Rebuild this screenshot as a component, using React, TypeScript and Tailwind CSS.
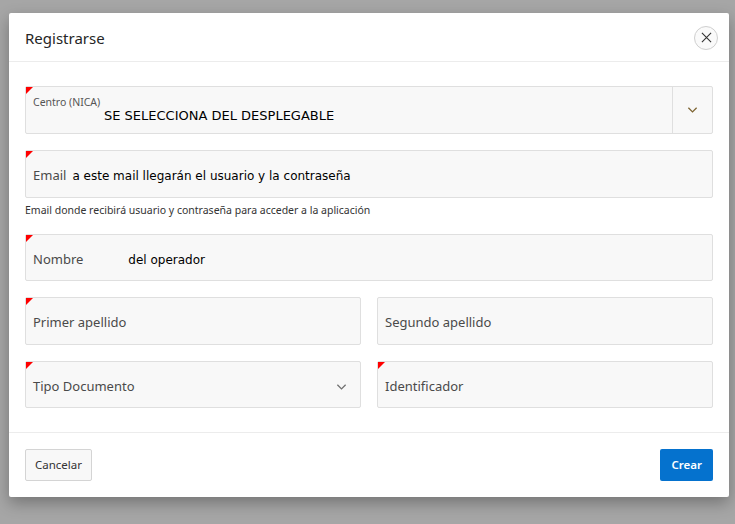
import React from 'react';

const uiFont = { fontFamily: '"Noto Sans", "Open Sans", sans-serif' };
const handFont = { fontFamily: '"DejaVu Sans", "Liberation Sans", sans-serif' };

const Required: React.FC = () => (
  <span className="absolute left-0 top-0 w-0 h-0 border-t-[7px] border-r-[7px] border-t-[#ff0000] border-r-transparent" />
);

const Chevron: React.FC<{ className?: string }> = ({ className }) => (
  <svg viewBox="0 0 12 8" className={className} fill="none" stroke="currentColor" strokeWidth="1.4">
    <path d="M1.5 1.5 L6 6 L10.5 1.5" />
  </svg>
);

const Field: React.FC<{
  label: string;
  value?: string;
  valueOffset?: string;
  required?: boolean;
  select?: boolean;
  short?: boolean;
}> = ({ label, value, valueOffset, required, select, short }) => (
  <div
    className={`relative ${short ? 'h-[47px]' : 'h-[48px]'} flex items-center bg-[#f8f8f8] border border-[#dfdfdf] rounded-[2px] pl-[7px] pr-3`}
  >
    {required && <Required />}
    <span className="text-[13px] text-[#4a4a4a] pt-1">{label}</span>
    {value && (
      <span className={`text-[12px] text-black pt-1 ${valueOffset}`} style={handFont}>
        {value}
      </span>
    )}
    {select && <Chevron className="ml-auto w-[11px] h-[8px] text-[#707070] mt-1 mr-[1px]" />}
  </div>
);

export default function App() {
  return (
    <div className="w-full h-[524px] bg-[#a6a6a6] pt-[13px] pl-[9px] overflow-hidden" style={uiFont}>
      <div className="w-[720px] bg-white rounded-[2px] shadow-[0_6px_16px_rgba(0,0,0,0.3)] flex flex-col">
        {/* Header */}
        <div className="h-[49px] flex items-center justify-between pl-4 pr-[11px] border-b border-[#ececec]">
          <h1 className="text-[15px] text-[#262626] pt-[2px]">Registrarse</h1>
          <button className="w-[24px] h-[24px] mt-[1px] rounded-full border border-[#cfcfcf] bg-[#fafafa] flex items-center justify-center text-[#333]">
            <svg viewBox="0 0 12 12" className="w-[11px] h-[11px]" stroke="currentColor" strokeWidth="1.2">
              <path d="M1 1 L11 11 M11 1 L1 11" />
            </svg>
          </button>
        </div>

        {/* Body */}
        <div className="px-4 pt-6 pb-6 flex flex-col">
          {/* Centro */}
          <div className="relative h-[48px] flex bg-[#f8f8f8] border border-[#dfdfdf] rounded-[2px]">
            <Required />
            <div className="flex-1 flex flex-col pl-[7px] pt-[8px]">
              <span className="text-[10.5px] leading-[14px] text-[#555]">Centro (NICA)</span>
              <span className="text-[13px] leading-[16px] text-black pl-[71px] mt-[-1px]" style={handFont}>
                SE SELECCIONA DEL DESPLEGABLE
              </span>
            </div>
            <div className="w-[40px] border-l border-[#dfdfdf] flex items-center justify-center">
              <Chevron className="w-[11px] h-[8px] text-[#7d6432]" />
            </div>
          </div>

          <div className="mt-4">
            <Field label="Email" value="a este mail llegarán el usuario y la contraseña" valueOffset="ml-[6px]" required />
          </div>
          <p className="text-[10.5px] text-[#333] mt-[5px] leading-[14px]">
            Email donde recibirá usuario y contraseña para acceder a la aplicación
          </p>

          <div className="mt-[17px]">
            <Field label="Nombre" value="del operador" valueOffset="ml-[45px]" required short />
          </div>

          <div className="mt-4 grid grid-cols-2 gap-4">
            <Field label="Primer apellido" required />
            <Field label="Segundo apellido" />
          </div>

          <div className="mt-4 grid grid-cols-2 gap-4">
            <Field label="Tipo Documento" required select short />
            <Field label="Identificador" required short />
          </div>
        </div>

        {/* Footer */}
        <div className="border-t border-[#ececec] px-4 pt-4 pb-4 flex justify-between">
          <button className="h-[32px] px-[9px] bg-[#f8f8f8] border border-[#d4d4d4] rounded-[2px] text-[11.5px] text-[#333]">
            Cancelar
          </button>
          <button className="h-[32px] px-[11px] bg-[#0572ce] rounded-[2px] text-[11.5px] font-semibold text-white">
            Crear
          </button>
        </div>
      </div>
    </div>
  );
}
